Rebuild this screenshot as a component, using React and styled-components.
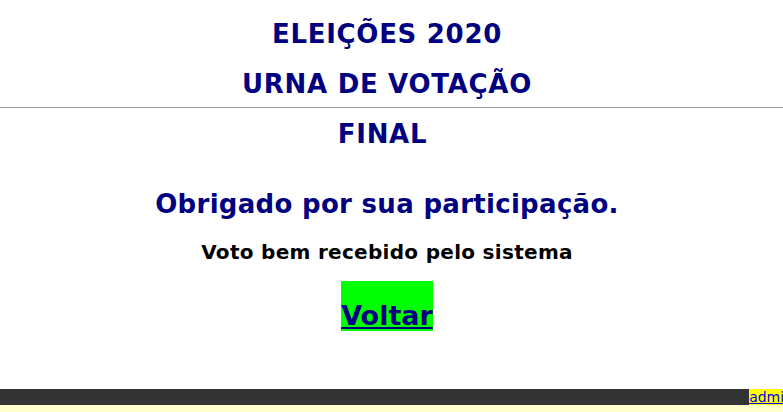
import React from 'react';
import styled, { createGlobalStyle } from 'styled-components';

const GlobalStyle = createGlobalStyle`
  html, body {
    margin: 0;
    padding: 0;
    background: #ffffff;
    overflow-x: hidden;
  }
  body {
    font-family: "DejaVu Sans", Verdana, sans-serif;
  }
`;

const Page = styled.div`
  display: flex;
  flex-direction: column;
`;

const Header = styled.header`
  display: flex;
  flex-direction: column;
  align-items: center;
  padding-top: 20px;
`;

const Title = styled.h1`
  margin: 0 0 ${(p) => p.$gap || 0}px;
  padding-right: 9px;
  font-size: 26px;
  line-height: 28px;
  font-weight: bold;
  letter-spacing: 0.7px;
  color: #000080;
  text-align: center;
`;

const Divider = styled.hr`
  width: 100%;
  margin: 9px 0 0;
  border: 0;
  border-top: 1px solid #a0a0a0;
  height: 0;
`;

const Main = styled.main`
  display: flex;
  flex-direction: column;
  align-items: center;
  padding-top: 12px;
  padding-right: 9px;
`;

const Thanks = styled.h2`
  margin: 42px 0 0;
  font-size: 26px;
  line-height: 28px;
  font-weight: bold;
  letter-spacing: 0.3px;
  color: #000080;
`;

const Message = styled.p`
  margin: 22px 0 0;
  font-size: 20px;
  line-height: 24px;
  font-weight: bold;
  letter-spacing: 0.3px;
  color: #000000;
`;

const BackLink = styled.a`
  display: inline-block;
  margin-top: 17px;
  padding-top: 20px;
  font-size: 27px;
  line-height: 30px;
  font-weight: bold;
  color: #000080;
  background: #00ff00;
  text-decoration: underline;
`;

const Footer = styled.footer`
  margin-top: 58px;
  display: flex;
  flex-direction: column;
`;

const FooterBar = styled.div`
  display: flex;
  justify-content: flex-end;
  background: #333333;
  overflow: hidden;
`;

const AdminLink = styled.a`
  font-size: 14px;
  line-height: 16px;
  color: #0000ee;
  background: #ffff00;
  text-decoration: underline;
  margin-right: -10px;
`;

const FooterStrip = styled.div`
  height: 8px;
  background: #ffffcc;
`;

export default function App() {
  return (
    <Page>
      <GlobalStyle />
      <Header>
        <Title $gap={22}>ELEIÇÕES 2020</Title>
        <Title>URNA DE VOTAÇÃO</Title>
        <Divider />
      </Header>
      <Main>
        <Title>FINAL</Title>
        <Thanks>Obrigado por sua participação.</Thanks>
        <Message>Voto bem recebido pelo sistema</Message>
        <BackLink href="#">Voltar</BackLink>
      </Main>
      <Footer>
        <FooterBar>
          <AdminLink href="#">admin</AdminLink>
        </FooterBar>
        <FooterStrip />
      </Footer>
    </Page>
  );
}
